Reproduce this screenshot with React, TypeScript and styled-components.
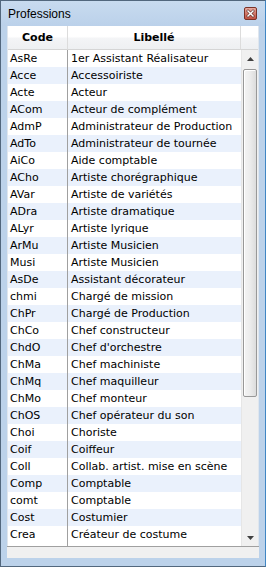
import React from "react";
import styled, { createGlobalStyle } from "styled-components";

const Global = createGlobalStyle`
  html, body { margin: 0; padding: 0; background: #ffffff; }
  body { width: 266px; height: 567px; overflow: hidden; }
`;

const rows: [string, string][] = [
  ["AsRe", "1er Assistant Réalisateur"],
  ["Acce", "Accessoiriste"],
  ["Acte", "Acteur"],
  ["ACom", "Acteur de complément"],
  ["AdmP", "Administrateur de Production"],
  ["AdTo", "Administrateur de tournée"],
  ["AiCo", "Aide comptable"],
  ["ACho", "Artiste chorégraphique"],
  ["AVar", "Artiste de variétés"],
  ["ADra", "Artiste dramatique"],
  ["ALyr", "Artiste lyrique"],
  ["ArMu", "Artiste Musicien"],
  ["Musi", "Artiste Musicien"],
  ["AsDe", "Assistant décorateur"],
  ["chmi", "Chargé de mission"],
  ["ChPr", "Chargé de Production"],
  ["ChCo", "Chef constructeur"],
  ["ChdO", "Chef d'orchestre"],
  ["ChMa", "Chef machiniste"],
  ["ChMq", "Chef maquilleur"],
  ["ChMo", "Chef monteur"],
  ["ChOS", "Chef opérateur du son"],
  ["Choi", "Choriste"],
  ["Coif", "Coiffeur"],
  ["Coll", "Collab. artist. mise en scène"],
  ["Comp", "Comptable"],
  ["comt", "Comptable"],
  ["Cost", "Costumier"],
  ["Crea", "Créateur de costume"],
];

const GRID_FONT = `"DejaVu Sans", Verdana, sans-serif`;

const Window = styled.div`
  box-sizing: border-box;
  width: 266px;
  height: 567px;
  border: 1px solid #52677d;
  border-right-color: #3f86c4;
  background: #bcd2ea;
  display: flex;
  flex-direction: column;
`;

const TitleBar = styled.div`
  height: 25px;
  flex: none;
  display: flex;
  align-items: center;
  justify-content: space-between;
  padding: 0 8px 0 7px;
  background: linear-gradient(#c8dbef, #bbd1ea);
  font-family: "Liberation Sans", Arial, sans-serif;
  font-size: 12px;
  color: #000;
`;

const CloseButton = styled.div`
  width: 13px;
  height: 13px;
  display: flex;
`;

const Body = styled.div`
  flex: 1;
  margin: 0 6px 8px 6px;
  display: flex;
  flex-direction: column;
  background: #f0f0f0;
`;

const Grid = styled.div`
  height: 520px;
  flex: none;
  display: grid;
  grid-template-columns: 1px 59px 1px 173px 17px 1px;
  grid-template-rows: 24px 496px;
  background: #ffffff;
  font-family: ${GRID_FONT};
  font-size: 11px;
  color: #000;
`;

const EdgeLine = styled.div<{ $col: number }>`
  grid-row: 1 / span 2;
  grid-column: ${(p) => p.$col};
  background: #dfe6ee;
`;

const HeaderCell = styled.div<{ $last?: boolean }>`
  box-sizing: border-box;
  display: flex;
  align-items: center;
  justify-content: center;
  font-weight: bold;
  background: linear-gradient(#ffffff 0%, #ffffff 45%, #f3f4f6 55%, #eef0f2 100%);
  border-bottom: 1px solid #d5d5d5;
  border-right: ${(p) => (p.$last ? "none" : "1px solid #dcdcdc")};
  padding-bottom: 1px;
`;

const HeaderCode = styled(HeaderCell)`
  grid-column: 2 / span 2;
`;

const HeaderLabel = styled(HeaderCell)`
  grid-column: 4;
`;

const HeaderScroll = styled(HeaderCell)`
  grid-column: 5;
`;

const RowsArea = styled.div`
  grid-column: 2 / span 3;
  grid-row: 2;
  display: flex;
  flex-direction: column;
  position: relative;
  overflow: hidden;
`;

const Row = styled.div<{ $alt: boolean }>`
  height: 17px;
  flex: none;
  display: grid;
  grid-template-columns: 59px 1px 173px;
  background: ${(p) => (p.$alt ? "#eaf1fc" : "#ffffff")};
`;

const Cell = styled.div`
  display: flex;
  align-items: center;
  padding-left: 3px;
  white-space: nowrap;
  overflow: hidden;
`;

const CodeCell = styled(Cell)`
  padding-left: 2px;
`;

const Divider = styled.div`
  background: #a0a0a0;
`;

const ColumnDivider = styled.div`
  position: absolute;
  left: 59px;
  top: 0;
  bottom: 0;
  width: 1px;
  background: #a0a0a0;
`;

const Scrollbar = styled.div`
  grid-column: 5;
  grid-row: 2;
  box-sizing: border-box;
  background: #f0f0f0;
  border-left: 1px solid #e6e6e6;
  display: flex;
  flex-direction: column;
  align-items: center;
`;

const ArrowButton = styled.div`
  height: 17px;
  width: 100%;
  flex: none;
  display: flex;
  align-items: center;
  justify-content: center;
`;

const Track = styled.div`
  flex: 1;
  width: 100%;
  display: flex;
  flex-direction: column;
  align-items: center;
  padding-top: 2px;
`;

const Thumb = styled.div`
  box-sizing: border-box;
  width: 14px;
  height: 328px;
  border: 1px solid #989898;
  border-radius: 2px;
  background: linear-gradient(90deg, #f4f4f4 0%, #ececec 50%, #dcdcdc 100%);
  box-shadow: inset 1px 1px 0 #ffffff;
`;

const BottomStrip = styled.div`
  flex: 1;
  border-top: 1px solid #a0a0a0;
  background: #f0f0f0;
`;

const Arrow = ({ up }: { up: boolean }) => (
  <svg width="7" height="4" viewBox="0 0 7 4">
    <path d={up ? "M0 4 L3.5 0 L7 4 Z" : "M0 0 L3.5 4 L7 0 Z"} fill="#404040" />
  </svg>
);

export default function App() {
  return (
    <>
      <Global />
      <Window>
        <TitleBar>
          <span>Professions</span>
          <CloseButton>
            <svg width="13" height="13" viewBox="0 0 13 13">
              <defs>
                <linearGradient id="cb" x1="0" y1="0" x2="0" y2="1">
                  <stop offset="0" stopColor="#eab0a6" />
                  <stop offset="0.5" stopColor="#d0786a" />
                  <stop offset="1" stopColor="#c05040" />
                </linearGradient>
              </defs>
              <rect x="0.5" y="0.5" width="12" height="12" rx="1.5" fill="url(#cb)" stroke="#7a3328" />
              <path d="M4 4 L9 9 M9 4 L4 9" stroke="#5a2a24" strokeWidth="2.6" strokeLinecap="square" />
              <path d="M4 4 L9 9 M9 4 L4 9" stroke="#ffffff" strokeWidth="1.5" strokeLinecap="square" />
            </svg>
          </CloseButton>
        </TitleBar>
        <Body>
          <Grid>
            <EdgeLine $col={1} />
            <HeaderCode>Code</HeaderCode>
            <HeaderLabel>Libellé</HeaderLabel>
            <HeaderScroll $last />
            <RowsArea>
              {rows.map(([code, label], i) => (
                <Row key={code + i} $alt={i % 2 === 1}>
                  <CodeCell>{code}</CodeCell>
                  <Divider />
                  <Cell>{label}</Cell>
                </Row>
              ))}
              <ColumnDivider />
            </RowsArea>
            <Scrollbar>
              <ArrowButton>
                <Arrow up />
              </ArrowButton>
              <Track>
                <Thumb />
              </Track>
              <ArrowButton>
                <Arrow up={false} />
              </ArrowButton>
            </Scrollbar>
            <EdgeLine $col={6} />
          </Grid>
          <BottomStrip />
        </Body>
      </Window>
    </>
  );
}
